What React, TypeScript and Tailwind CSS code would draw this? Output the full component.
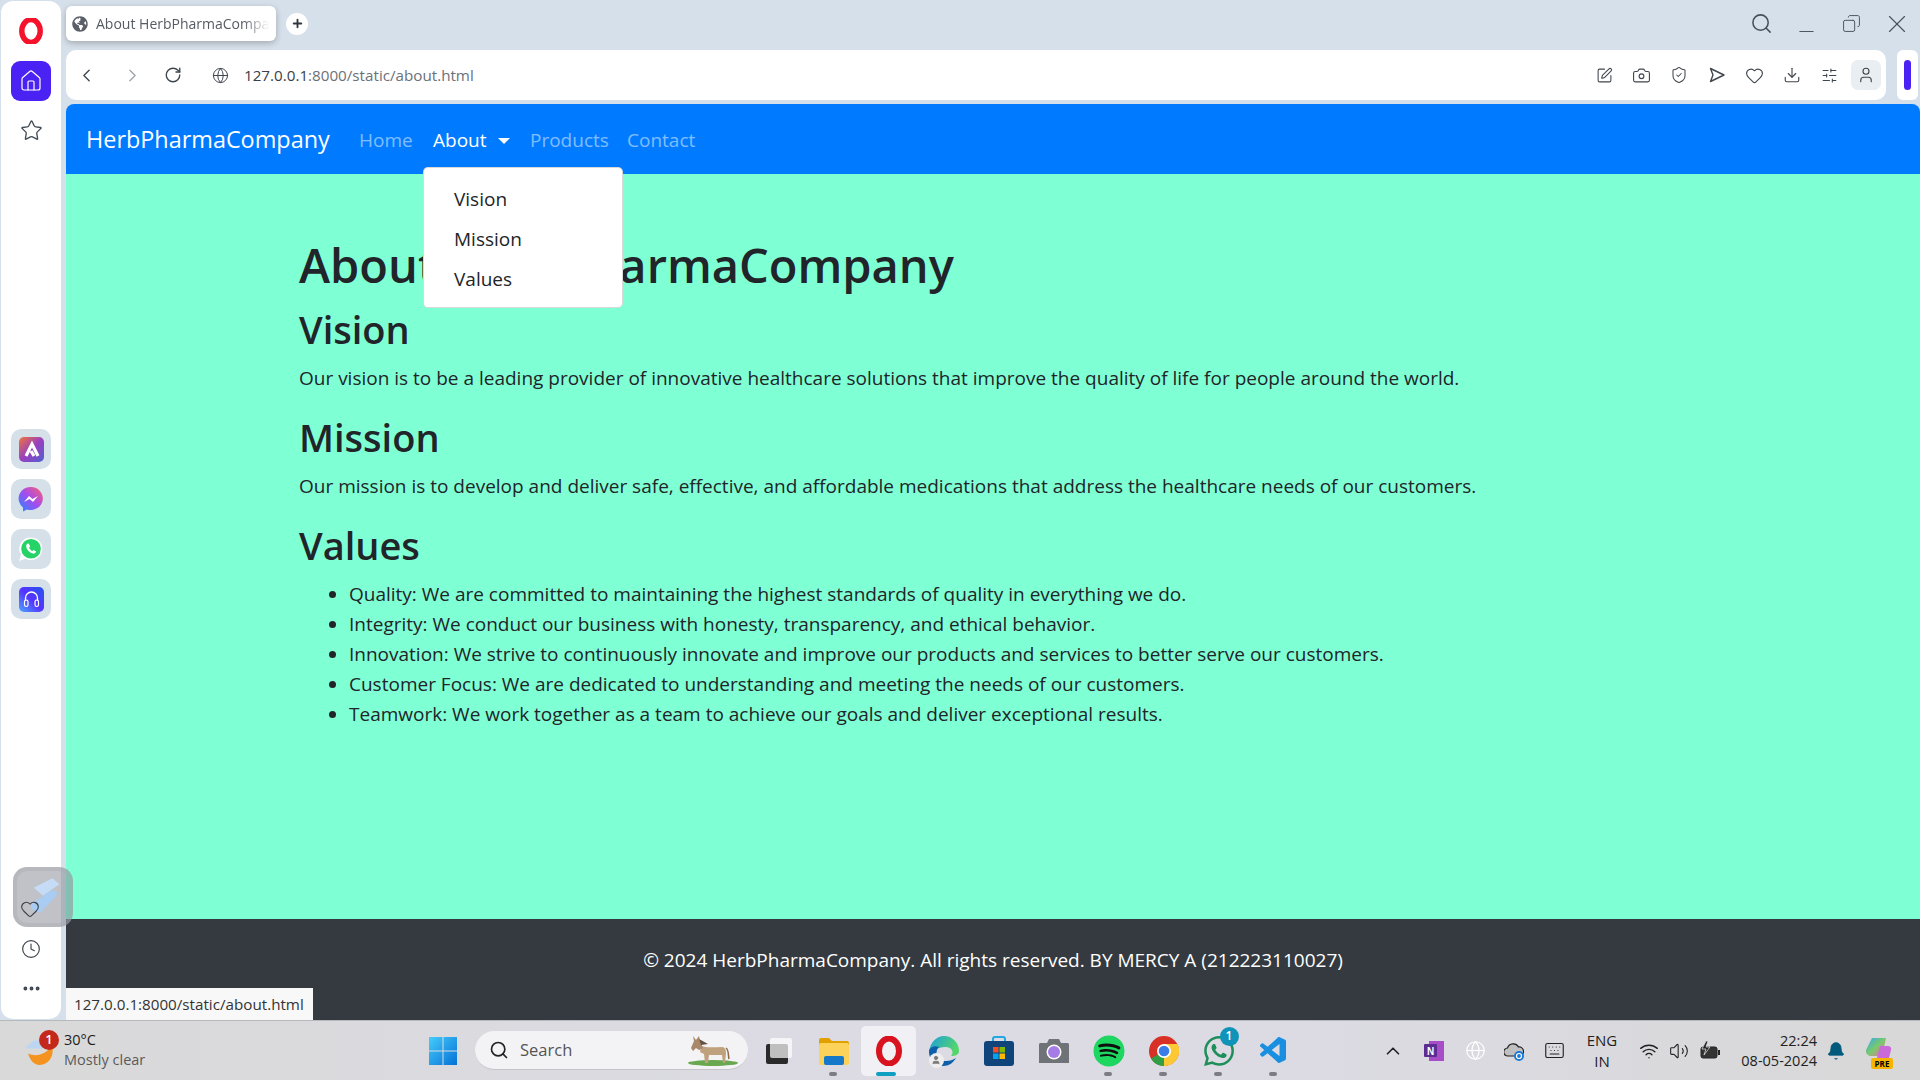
import { Camera, ChevronLeft, ChevronRight, ChevronUp, Clock, Copy, Download, Globe, Heart, Minus, MoreHorizontal, RotateCw, Search, ShieldCheck, SlidersHorizontal, Star, SquarePen, User, Volume2, Wifi, X, Bell, Keyboard, Plus, Home } from "lucide-react";
import { FaGlobeAmericas, FaSpotify } from "react-icons/fa";
import { SiWhatsapp } from "react-icons/si";
import { VscVscode } from "react-icons/vsc";

const OperaLogo = ({ size = 26 }: { size?: number }) => (
  <svg width={size} height={size} viewBox="0 0 24 24">
    <ellipse cx="12" cy="12" rx="8.5" ry="10.5" fill="none" stroke="#f5122b" strokeWidth="5" />
  </svg>
);

const GradientTile = ({ children }: { children: React.ReactNode }) => (
  <div className="w-10 h-10 rounded-[10px] bg-[#d6e0e8] flex items-center justify-center">{children}</div>
);

const sidebarApps = (
  <>
    <GradientTile>
      <svg width="25" height="25" viewBox="0 0 25 25">
        <defs>
          <linearGradient id="aria" x1="0" y1="0" x2="1" y2="1">
            <stop offset="0" stopColor="#f0753a" />
            <stop offset="0.5" stopColor="#9a3fc0" />
            <stop offset="1" stopColor="#4f62d0" />
          </linearGradient>
        </defs>
        <rect width="25" height="25" rx="5" fill="url(#aria)" />
        <path d="M7 19 L13 7 L19 19 M12 14 L15 19" fill="none" stroke="#fff" strokeWidth="3.2" />
      </svg>
    </GradientTile>
    <GradientTile>
      <svg width="26" height="26" viewBox="0 0 26 26">
        <defs>
          <linearGradient id="msg" x1="0" y1="1" x2="1" y2="0">
            <stop offset="0" stopColor="#1f8cff" />
            <stop offset="0.5" stopColor="#a24cf0" />
            <stop offset="1" stopColor="#ff5f6d" />
          </linearGradient>
        </defs>
        <path d="M13 1a12 11.5 0 1 1-4 22.4L5 25.5v-4A11.5 11.5 0 0 1 13 1z" fill="url(#msg)" />
        <path d="M6 16l5-6 3.5 3 5.5-3-5 6-3.5-3z" fill="#fff" />
      </svg>
    </GradientTile>
    <GradientTile>
      <svg width="26" height="26" viewBox="0 0 26 26">
        <path d="M13 1.5a11.3 11.3 0 0 1 0 22.6c-2 0-3.7-.5-5.300-1.400L1 25l2-6.300A11.300 11.300 0 0 1 13 1.500z" fill="#fff" />
        <circle cx="13" cy="12.800" r="9.800" fill="#25d366" />
        <path d="M9.500 7.500c-1.500 1-1.800 3-.5 5.500 1.400 2.600 3.600 4.200 6 4.600 1.600.2 2.800-.6 3.200-2l-2.600-1.500-1.200 1c-1.500-.7-2.600-1.900-3.300-3.300l1-1.200-1.200-2.800z" fill="#fff" />
      </svg>
    </GradientTile>
    <GradientTile>
      <svg width="25" height="25" viewBox="0 0 25 25">
        <defs>
          <linearGradient id="music" x1="0" y1="1" x2="1" y2="0">
            <stop offset="0" stopColor="#4aa8ff" />
            <stop offset="0.5" stopColor="#5533ff" />
            <stop offset="1" stopColor="#2255ee" />
          </linearGradient>
        </defs>
        <rect width="25" height="25" rx="5" fill="url(#music)" />
        <path d="M6.500 14V11a6 6 0 0 1 12 0v3" fill="none" stroke="#fff" strokeWidth="1.300" />
        <rect x="5.500" y="13" width="3.500" height="6.500" rx="1.700" fill="none" stroke="#fff" strokeWidth="1.200" />
        <rect x="16" y="13" width="3.500" height="6.500" rx="1.700" fill="none" stroke="#fff" strokeWidth="1.200" />
      </svg>
    </GradientTile>
  </>
);

const Sidebar = () => (
  <aside className="w-[60px] ml-[1px] mt-[1px] mb-[1px] bg-white rounded-[12px] flex flex-col items-center relative">
    <div className="mt-[17px] h-[26px]"><OperaLogo /></div>
    <div className="mt-[17px] w-10 h-10 rounded-[9px] bg-[#4b22f4] flex items-center justify-center">
      <Home size={24} color="#fff" strokeWidth={1.2} />
    </div>
    <Star size={23} className="mt-[18px] text-[#444b55]" strokeWidth={1.4} />
    <div className="mt-[287px] flex flex-col gap-[10px]">{sidebarApps}</div>
    <div className="mt-auto mb-[20px] flex flex-col items-center">
      <Clock size={20} className="text-[#3f4650]" strokeWidth={1.4} />
      <MoreHorizontal size={21} className="mt-[19px] text-[#3f4650]" strokeWidth={2.4} />
    </div>
    {/* item being dragged, lies over the page edge */}
    <div className="absolute z-10 left-[12px] top-[866px] w-[60px] h-[60px] rounded-[14px] bg-[#82858f]/50 border-[4px] border-[#a7a9b2]/40 flex items-center justify-center">
      <svg width="42" height="42" viewBox="0 0 36 36">
        <path d="M10 10 L26 2 L32 7 L18 17z" fill="#c6dcf6" />
        <path d="M8 24 L24 13 Q30 11 30 16 L16 31 Q8 32 8 24z" fill="#a9cdf2" />
      </svg>
    </div>
    <Heart size={20} className="absolute z-10 left-[19px] top-[898px] text-[#3a3f48]" strokeWidth={1.3} />
  </aside>
);

const TabStrip = () => (
  <div className="h-[50px] flex items-center">
    <div className="mb-[3px] w-[210px] h-[35px] bg-white rounded-[6px] shadow-[0_2px_6px_rgba(0,0,0,0.25)] flex items-center pl-[6px]">
      <FaGlobeAmericas size={16} className="text-[#5b6068] shrink-0" />
      <span className="ml-[8px] text-[14px] text-[#555b63] whitespace-nowrap w-[173px] [mask-image:linear-gradient(90deg,#000_85%,transparent)] truncate [text-overflow:clip]">
        About HerbPharmaCompa
      </span>
    </div>
    <div className="mb-[3px] ml-[10px] w-[22px] h-[22px] rounded-full bg-white flex items-center justify-center">
      <Plus size={13} strokeWidth={3.4} className="text-[#30363e]" />
    </div>
    <div className="ml-auto mb-[3px] flex items-center text-[#4a4f57] pr-[1px]">
      <div className="w-[45px] flex justify-center"><Search size={23} strokeWidth={1.6} /></div>
      <div className="w-[45px] flex justify-center pt-[16px]"><Minus size={23} strokeWidth={1} /></div>
      <div className="w-[45px] flex justify-center"><Copy size={19} strokeWidth={1.2} className="-scale-x-100" /></div>
      <div className="w-[45px] flex justify-center"><X size={30} strokeWidth={0.9} /></div>
    </div>
  </div>
);

const Toolbar = () => (
  <div className="h-[50px] flex">
    <div className="w-[1820px] bg-white rounded-[10px] flex items-center text-[#40464e]">
      <ChevronLeft size={21} strokeWidth={1.6} className="ml-[10px]" />
      <ChevronRight size={21} strokeWidth={1.4} className="ml-[25px] text-[#9aa0a8]" />
      <RotateCw size={18} strokeWidth={1.8} className="ml-[21px]" />
      <Globe size={17} strokeWidth={1.4} className="ml-[30px]" />
      <span className="ml-[15px] pt-[1px] text-[15.2px] text-[#3a4048]">
        127.0.0.1<span className="text-[#6b7178]">:8000/static/about.html</span>
      </span>
      <div className="ml-auto mr-[2px] flex items-center">
        <div className="w-[37.5px] flex justify-center"><SquarePen size={17} strokeWidth={1.5} /></div>
        <div className="w-[37.5px] flex justify-center"><Camera size={19} strokeWidth={1.4} /></div>
        <div className="w-[37.5px] flex justify-center"><ShieldCheck size={18} strokeWidth={1.4} /></div>
        <div className="w-[37.5px] flex justify-center">
          <svg width="18" height="18" viewBox="0 0 18 18" fill="none" stroke="currentColor" strokeWidth="1.4" strokeLinejoin="round">
            <path d="M2.500 2.500 L16 9 L2.500 15.500 L5 9z" />
          </svg>
        </div>
        <div className="w-[37.5px] flex justify-center"><Heart size={19} strokeWidth={1.4} /></div>
        <div className="w-[37.5px] flex justify-center"><Download size={18} strokeWidth={1.5} /></div>
        <div className="w-[37.5px] flex justify-center"><SlidersHorizontal size={17} strokeWidth={1.5} /></div>
        <div className="w-[30px] h-[30px] mx-[3px] rounded-[7px] bg-[#e9eef2] flex items-center justify-center"><User size={18} strokeWidth={1.5} /></div>
      </div>
    </div>
    <div className="ml-[11px] w-[21px] bg-white rounded-[6px] flex items-center justify-center">
      <div className="w-[7px] h-[30px] rounded-full bg-[#4b22f4]" />
    </div>
  </div>
);

const Navbar = () => (
  <nav className="h-[70px] bg-[#007bff] rounded-t-[8px] flex items-center pl-[20px] pt-[2px] relative text-[19px]">
    <a className="w-[273px] text-[23.4px] text-white">HerbPharmaCompany</a>
    <a className="w-[74px] text-white/50">Home</a>
    <a className="w-[97px] text-white flex items-center">
      About
      <span className="ml-[11px] mt-[1px] w-0 h-0 border-x-[6px] border-x-transparent border-t-[6px] border-t-white" />
    </a>
    <a className="w-[97px] text-white/50">Products</a>
    <a className="text-white/50">Contact</a>
    <div className="absolute left-[357px] top-[63px] w-[200px] h-[141px] py-[11px] bg-white rounded-[5px] border border-black/15 text-[#212529] z-10">
      <div className="h-[40px] pl-[30px] flex items-center">Vision</div>
      <div className="h-[40px] pl-[30px] flex items-center">Mission</div>
      <div className="h-[40px] pl-[30px] flex items-center">Values</div>
    </div>
  </nav>
);

const values = [
  "Quality: We are committed to maintaining the highest standards of quality in everything we do.",
  "Integrity: We conduct our business with honesty, transparency, and ethical behavior.",
  "Innovation: We strive to continuously innovate and improve our products and services to better serve our customers.",
  "Customer Focus: We are dedicated to understanding and meeting the needs of our customers.",
  "Teamwork: We work together as a team to achieve our goals and deliver exceptional results.",
];

const Page = () => (
  <div className="flex-1 flex flex-col relative mt-[4px]">
    <Navbar />
    <main className="flex-1 bg-[#7fffd4] pl-[233px] pt-[61px] text-[#212529] text-[19px] leading-[30px]">
      <h1 className="text-[47px] leading-[60px] font-semibold mb-[10px]">About HerbPharmaCompany</h1>
      <h2 className="text-[38px] leading-[48px] font-semibold mb-[10px]">Vision</h2>
      <p className="mb-[20px]">Our vision is to be a leading provider of innovative healthcare solutions that improve the quality of life for people around the world.</p>
      <h2 className="text-[38px] leading-[48px] font-semibold mb-[10px]">Mission</h2>
      <p className="mb-[20px]">Our mission is to develop and deliver safe, effective, and affordable medications that address the healthcare needs of our customers.</p>
      <h2 className="text-[38px] leading-[48px] font-semibold mb-[10px]">Values</h2>
      <ul className="list-disc pl-[50px]">
        {values.map((v) => (
          <li key={v}>{v}</li>
        ))}
      </ul>
    </main>
    <footer className="h-[101px] bg-[#343a40] text-white text-[19px] leading-[30px] text-center pt-[26px]">
      © 2024 HerbPharmaCompany. All rights reserved. BY MERCY A (212223110027)
    </footer>
    <div className="absolute left-0 bottom-0 w-[248px] h-[33px] bg-[#f8f8f8] border-t border-r border-[#343a40] text-[#333] text-[15.2px] flex items-center pl-[8px]">
      127.0.0.1:8000/static/about.html
    </div>
  </div>
);

const Cell = ({ children, dot, active }: { children: React.ReactNode; dot?: boolean; active?: boolean }) => (
  <div className={active ? "w-[55px] h-[50px] flex items-center justify-center relative bg-[#f1f0f5] rounded-[5px]" : "w-[55px] h-[50px] flex items-center justify-center relative"}>
    {children}
    {dot && <span className="absolute bottom-0 left-[23px] w-[8px] h-[4px] rounded-full bg-[#7c7c84]" />}
    {active && <span className="absolute bottom-0 left-[15px] w-[20px] h-[4px] rounded-full bg-[#0f9fc0]" />}
  </div>
);

const Taskbar = () => (
  <div className="h-[60px] border-t border-[#b5b8bc] bg-[linear-gradient(90deg,#d9d9d9,#dcdbe4_45%,#dcdbe4_65%,#d8d8d8)] flex items-center text-[#1c1c1c]">
    <div className="w-[415px] flex items-center pl-[25px] relative">
      <svg width="31" height="31" viewBox="0 0 30 30">
        <path d="M1 13a4 4 0 0 1 4-4 6 6 0 0 1 11 0 3 3 0 0 1 2 4z" fill="#bcd6f2" />
        <path d="M3 18c7 3 17 2 23-8 3 10-3 19-12 19-5 0-9-4-11-11z" fill="#f4931f" />
      </svg>
      <span className="absolute left-[39px] top-[-2px] w-[20px] h-[20px] rounded-full bg-[#c4281c] text-white text-[13px] font-semibold flex items-center justify-center">1</span>
      <div className="ml-[8px] -mt-[2px] text-[14.5px] leading-[20px]">
        <div>30°C</div>
        <div className="text-[#5a5a5a]">Mostly clear</div>
      </div>
    </div>
    <Cell>
      <svg width="30" height="30" viewBox="0 0 30 30">
        <defs>
          <linearGradient id="win" x1="0" y1="0" x2="1" y2="1">
            <stop offset="0" stopColor="#45cdfb" />
            <stop offset="1" stopColor="#0570d6" />
          </linearGradient>
        </defs>
        <path d="M1 1h13.500v13.500H1zM15.500 1H29v13.500H15.500zM1 15.500h13.500V29H1zM15.500 15.500H29V29H15.500z" fill="url(#win)" />
      </svg>
    </Cell>
    <div className="ml-[5px] mr-[3px] w-[273px] h-[39px] rounded-full bg-[#f3f3f6] border-b border-[#c5c5c9] flex items-center pl-[14px] relative">
      <Search size={20} strokeWidth={2} className="text-[#222]" />
      <span className="ml-[11px] text-[16.5px] text-[#555]">Search</span>
      <svg width="52" height="34" viewBox="0 0 52 34" className="absolute right-[9px] top-[2px]">
        <ellipse cx="26" cy="30" rx="25" ry="3" fill="#69a84f" />
        <path d="M14 13c6 2 14 1 21 1 3 0 4 3 4 6l-1 10h-2l-1-8-13 0-1 8h-3l-1-9-4-2z" fill="#bfa17e" />
        <path d="M6 3l3 4 3-4 1 5 3 7-4 2-3-2-3 3-2-3 3-7z" fill="#a9876a" />
        <path d="M12 6l9 5-7 1z" fill="#66513f" />
        <path d="M39 15c3 2 2 7 3 11" fill="none" stroke="#8a6a4a" strokeWidth="1.500" />
      </svg>
    </div>
    <Cell>
      <div className="relative w-[26px] h-[26px]">
        <div className="absolute left-0 bottom-0 w-[22px] h-[20px] rounded-[2px] bg-[#2a2a2a]" />
        <div className="absolute right-0 top-0 w-[22px] h-[20px] rounded-[2px] bg-[#ffffff]/70" />
      </div>
    </Cell>
    <Cell dot>
      <svg width="30" height="28" viewBox="0 0 30 28">
        <path d="M0 3a2 2 0 0 1 2-2h8l3 3h15a2 2 0 0 1 2 2v4H0z" fill="#e0a100" />
        <rect y="6" width="30" height="22" rx="2" fill="#fcd25a" />
        <rect x="5" y="19" width="20" height="9" rx="2" fill="#1678c8" />
      </svg>
    </Cell>
    <Cell active>
      <svg width="30" height="30" viewBox="0 0 30 30">
        <ellipse cx="15" cy="15" rx="10" ry="12.500" fill="none" stroke="#d8121f" strokeWidth="6" />
      </svg>
    </Cell>
    <Cell>
      <div className="relative">
        <svg width="30" height="30" viewBox="0 0 30 30">
          <defs>
            <linearGradient id="edge" x1="0" y1="0" x2="1" y2="0.400">
              <stop offset="0" stopColor="#1b9de2" />
              <stop offset="1" stopColor="#54d66a" />
            </linearGradient>
          </defs>
          <path d="M15 0a15 15 0 0 1 15 15c0 4-4 5-8 5 3-3 2-9-6-9-7 0-12 5-16 5C1 7 7 0 15 0z" fill="url(#edge)" />
          <path d="M0 16c0-5 6-7 10-5-4 3-4 14 7 14 4 0 7-1 10-3-3 5-7 8-13 8-8 0-14-7-14-14z" fill="#0c5fa8" />
        </svg>
        <span className="absolute left-[0px] bottom-[-2px] w-[15px] h-[15px] rounded-full bg-[#eee] flex items-center justify-center">
          <User size={10} fill="#777" className="text-[#777]" />
        </span>
      </div>
    </Cell>
    <Cell>
      <svg width="30" height="30" viewBox="0 0 30 30">
        <path d="M9 6V3a2 2 0 0 1 2-2h8a2 2 0 0 1 2 2v3" fill="none" stroke="#22a7e0" strokeWidth="2" />
        <rect y="5" width="30" height="25" rx="3" fill="#10457c" />
        <rect x="9" y="11" width="5.500" height="5.500" fill="#f25022" />
        <rect x="15.500" y="11" width="5.500" height="5.500" fill="#7fba00" />
        <rect x="9" y="17.500" width="5.500" height="5.500" fill="#00a4ef" />
        <rect x="15.500" y="17.500" width="5.500" height="5.500" fill="#ffb900" />
      </svg>
    </Cell>
    <Cell>
      <svg width="30" height="26" viewBox="0 0 30 26">
        <path d="M1 5h7l2-4h10l2 4h6a2 2 0 0 1 2 1v19H0V6z" fill="#6f7276" />
        <circle cx="15" cy="14" r="7.500" fill="#fff" />
        <circle cx="15" cy="14" r="6" fill="#a57be6" />
      </svg>
    </Cell>
    <Cell dot>
      <div className="w-[30px] h-[30px] rounded-full bg-[#0e0e0e] flex items-center justify-center relative">
        <FaSpotify size={32} className="text-[#1ed760] absolute" />
      </div>
    </Cell>
    <Cell dot>
      <svg width="30" height="30" viewBox="0 0 30 30">
        <circle cx="15" cy="15" r="15" fill="#d93025" />
        <path d="M15 15 L2 22.500 A15 15 0 0 0 15 30 L22.500 17z" fill="#2f9e44" />
        <path d="M15 15 L15 30 A15 15 0 0 0 28.500 8 L15 8z" fill="#fcc934" />
        <circle cx="15" cy="15" r="7" fill="#fff" />
        <circle cx="15" cy="15" r="5.300" fill="#3a7de8" />
      </svg>
    </Cell>
    <Cell dot>
      <div className="relative">
        <SiWhatsapp size={30} className="text-[#1f8f5a]" />
        <span className="absolute left-[16px] top-[-9px] w-[19px] h-[19px] rounded-full bg-[#0f93b8] text-white text-[12px] font-semibold flex items-center justify-center">1</span>
      </div>
    </Cell>
    <Cell dot>
      <VscVscode size={32} className="text-[#1a8fe0]" />
    </Cell>
    <div className="flex-1" />
    <div className="flex items-center text-[#222]">
      <ChevronUp size={22} strokeWidth={1.8} />
      <svg width="20" height="20" viewBox="0 0 20 20" className="ml-[20px]">
        <rect x="5" width="15" height="20" fill="#a84dc8" />
        <rect y="3" width="13" height="13" rx="1" fill="#5c2d91" />
        <text x="6.500" y="13.500" fontSize="10" fontWeight="700" fill="#fff" textAnchor="middle" fontFamily="Liberation Sans">N</text>
      </svg>
      <Globe size={21} strokeWidth={1.4} className="ml-[21px] text-white" />
      <svg width="20" height="20" viewBox="0 0 20 20" className="ml-[18px]">
        <path d="M4 15a4 4 0 0 1-.500-8 6 6 0 0 1 11-1 4.500 4.500 0 0 1 1 9z" fill="#c0c0c0" stroke="#222" strokeWidth="1.200" />
        <circle cx="15" cy="15" r="5" fill="#1a7ad4" />
        <circle cx="15" cy="15" r="2.500" fill="none" stroke="#fff" strokeWidth="1.200" />
      </svg>
      <Keyboard size={21} strokeWidth={1.3} className="ml-[20px]" />
      <div className="ml-[14px] w-[46px] text-center text-[15px] leading-[21px]">ENG<br />IN</div>
      <Wifi size={20} strokeWidth={1.7} className="ml-[14px]" />
      <Volume2 size={20} strokeWidth={1.3} className="ml-[10px]" />
      <svg width="22" height="20" viewBox="0 0 22 20" className="ml-[10px]">
        <rect x="2" y="6" width="16" height="11" rx="2" fill="#333" stroke="#222" />
        <rect x="19" y="9" width="2" height="5" fill="#222" />
        <path d="M7 0 L3 8 H7 L5 14 L11 6 H7 L9 0z" fill="#222" stroke="#d9d9d9" strokeWidth="0.800" />
      </svg>
      <div className="ml-[18px] w-[78px] text-right text-[14.5px] leading-[20px]">22:24<br />08-05-2024</div>
      <Bell size={20} fill="#005a7c" strokeWidth={1} className="ml-[9px] text-[#005a7c]" />
      <div className="ml-[18px] mr-[28px] relative w-[28px] h-[28px]">
        <svg width="28" height="28" viewBox="0 0 28 28">
          <defs>
            <linearGradient id="cop" x1="0" y1="0" x2="1" y2="1">
              <stop offset="0" stopColor="#33a8f0" />
              <stop offset="0.5" stopColor="#7ac96b" />
              <stop offset="1" stopColor="#f06aa8" />
            </linearGradient>
          </defs>
          <path d="M8 1h14l-4 18H6a5 5 0 0 1-4-6z" fill="url(#cop)" />
          <path d="M16 9h8a3 3 0 0 1 3 4l-3 12H12z" fill="#c96ad8" />
        </svg>
        <span className="absolute left-[7px] bottom-[-4px] w-[22px] h-[11px] rounded-[2px] bg-[#f7b500] text-black text-[8px] leading-[11px] font-bold text-center">PRE</span>
      </div>
    </div>
  </div>
);

export default function App() {
  return (
    <div className="w-[1920px] h-[1080px] overflow-hidden flex flex-col font-['Open_Sans',sans-serif]">
      <div className="flex-1 min-h-0 flex bg-[#d6e0ea] relative">
        <Sidebar />
        <div className="flex-1 ml-[5px] flex flex-col min-w-0">
          <TabStrip />
          <Toolbar />
          <Page />
        </div>
      </div>
      <Taskbar />
    </div>
  );
}
